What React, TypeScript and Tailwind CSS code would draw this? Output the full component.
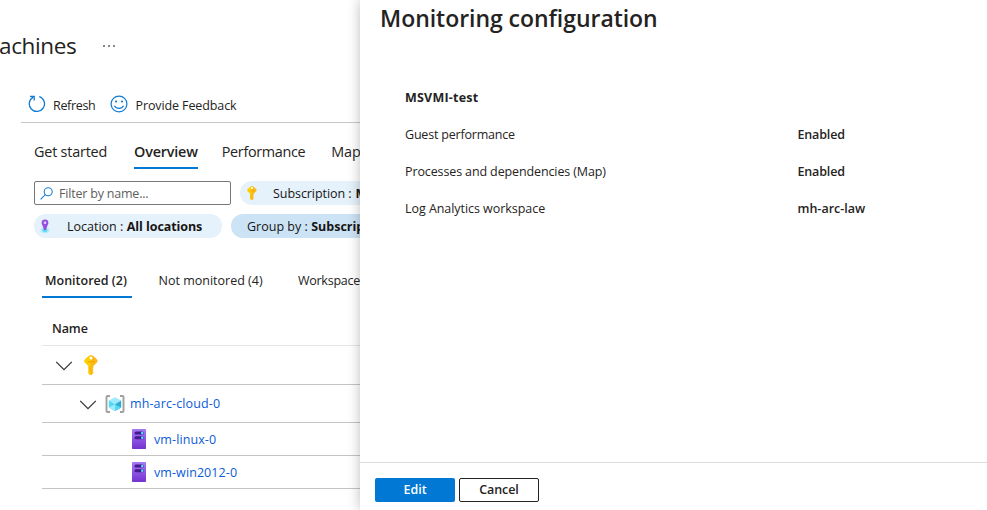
import type { ReactNode } from "react";

function KeyIcon({ className }: { className: string }) {
  return (
    <svg className={className} viewBox="0 0 14 20">
      <path d="M7 0 4.600.9 1 4.600C.3 5.400.3 6.600 1 7.400L4.500 11v7.600L6 20h1.500L9.300 18.300v-1.200l-.8-.8.8-.8v-1l-.8-.8.8-.8V11L13 7.400c.7-.8.7-2 0-2.800L9.400.9z" fill="#fbb917" />
      <path d="M7 0 4.600.9 1 4.600C.3 5.400.3 6.600 1 7.400L4.500 11v7.600L6 20h.6V0z" fill="#ffd000" />
      <circle cx="7" cy="3" r="1.500" fill="#fff" />
      <path d="M3.500 6.800h7" stroke="#f0a000" strokeWidth="1" />
      <path d="M6 11.500v6" stroke="#f5a300" strokeWidth=".8" />
    </svg>
  );
}

function PinIcon() {
  return (
    <svg className="h-[15px] w-3" viewBox="0 0 12 15">
      <ellipse cx="6" cy="11.300" rx="4.400" ry="3" fill="#b4ecfa" />
      <ellipse cx="6" cy="11.500" rx="2.600" ry="1.800" fill="#5fd9f3" />
      <path d="M6 .5a3.400 3.400 0 0 0-3.400 3.400c0 1.600 1.900 3.400 2.300 7.200h2.200c.4-3.800 2.300-5.600 2.300-7.200A3.400 3.400 0 0 0 6 .5z" fill="#9450e0" />
      <circle cx="6" cy="3.800" r="1.300" fill="#e6d0fb" />
    </svg>
  );
}

function Chevron() {
  return (
    <svg className="relative top-px h-[10px] w-[18px]" viewBox="0 0 18 10" fill="none" stroke="#3b3a39" strokeWidth="1.300">
      <path d="m1.200.9 7.800 7.800L16.800.9" />
    </svg>
  );
}

function ServerIcon() {
  return (
    <svg className="h-5 w-[14px]" viewBox="0 0 14 20">
      <defs>
        <linearGradient id="server" x1="0" y1="0" x2="0" y2="1">
          <stop offset="0" stopColor="#a67af4" />
          <stop offset="1" stopColor="#7431d0" />
        </linearGradient>
      </defs>
      <rect width="14" height="20" rx=".7" fill="url(#server)" />
      <rect x="2.500" y="2.500" width="9.300" height="3" rx="1.500" fill="#431a8c" />
      <rect x="2.500" y="7.300" width="9.300" height="3" rx="1.500" fill="#431a8c" />
      <circle cx="10.200" cy="4" r="1.200" fill="#50e6ff" />
      <circle cx="10.200" cy="8.800" r="1.200" fill="#50e6ff" />
    </svg>
  );
}

function ResourceGroupIcon() {
  return (
    <svg className="h-[18px] w-5" viewBox="0 0 20 18">
      <path d="M5 1H2.500a1 1 0 0 0-1 1v14a1 1 0 0 0 1 1H5M15 1h2.500a1 1 0 0 1 1 1v14a1 1 0 0 1-1 1H15" fill="none" stroke="#a0a0a0" strokeWidth="1.900" />
      <path d="m10 2.200 6.200 3.400L10 9.200 3.800 5.600z" fill="#9cebff" />
      <path d="M3.800 5.600 10 9.200v6.700l-6.200-3.500z" fill="#50d8f5" />
      <path d="M16.200 5.600 10 9.200v6.700l6.200-3.500z" fill="#32a9cf" />
      <path d="m3.800 12.400 6.200-3.200v6.700z" fill="#9cebff" />
      <path d="m16.200 12.400-6.200-3.200v6.700z" fill="#50d8f5" />
    </svg>
  );
}

function RefreshIcon() {
  return (
    <svg className="h-[18px] w-[18px]" viewBox="0 0 18 18" fill="none" stroke="#0f7bd4" strokeWidth="1.300">
      <path d="M11.300 1.600a7.600 7.600 0 1 1-6 .5" />
      <path d="M1.900 1.300h4.300v4.300" />
    </svg>
  );
}

function SmileIcon() {
  return (
    <svg className="h-[18px] w-[18px]" viewBox="0 0 18 18" fill="none" stroke="#0f7bd4" strokeWidth="1.200">
      <circle cx="9" cy="9" r="7.900" />
      <path d="M4.500 10.800c1.700 3.500 7.300 3.500 9 0" />
      <circle cx="6" cy="6.500" r="1.100" fill="#0f7bd4" stroke="none" />
      <circle cx="12" cy="6.500" r="1.100" fill="#0f7bd4" stroke="none" />
    </svg>
  );
}

function SearchIcon() {
  return (
    <svg className="h-[13px] w-[13px]" viewBox="0 0 13 13" fill="none" stroke="#1a80d6" strokeWidth="1.100">
      <circle cx="8.200" cy="4.800" r="4" />
      <path d="M5.300 7.700.6 12.400" />
    </svg>
  );
}

function Row({ className, children }: { className: string; children?: ReactNode }) {
  return <div className={`flex items-center border-b border-[#c4c4c4] ${className}`}>{children}</div>;
}

function Setting({ label, labelClass, value, valueClass }: { label: string; labelClass: string; value: string; valueClass: string }) {
  return (
    <div className="flex h-[37px] items-center">
      <span className={`w-[392.500px] ${labelClass}`}>{label}</span>
      <span className={`font-semibold ${valueClass}`}>{value}</span>
    </div>
  );
}

export default function App() {
  return (
    <div className="flex h-[510px] w-[987px] overflow-hidden bg-white font-['Open_Sans','Noto_Sans',sans-serif] text-[12.5px] leading-[18px] whitespace-nowrap text-[#242322]">
      <main className="flex w-[360px] shrink-0 flex-col overflow-hidden">
        <header className="flex h-[88px] items-center pt-1">
          <h1 className="-ml-px w-[104px] text-[22.5px] leading-[30px] tracking-[-0.35px]">achines</h1>
          <div className="flex gap-[3px]">
            <i className="h-[2px] w-[2px] bg-[#8a8886]" />
            <i className="h-[2px] w-[2px] bg-[#8a8886]" />
            <i className="h-[2px] w-[2px] bg-[#8a8886]" />
          </div>
        </header>

        <div className="ml-[21px] flex h-[35px] shrink-0 items-center border-b border-[#c8c8c8] pl-[7px]">
          <span className="mb-[2px]"><RefreshIcon /></span>
          <span className="mt-[2px] ml-[7px] w-[57px] tracking-[-0.33px]">Refresh</span>
          <span className="mb-[2px]"><SmileIcon /></span>
          <span className="mt-[2px] ml-[7.500px] tracking-[-0.11px]">Provide Feedback</span>
        </div>

        <nav className="flex h-[46px] shrink-0 pl-[34px] text-[14.4px]">
          <span className="mr-[27px] w-[73px] pt-5 tracking-[-0.2px]">Get started</span>
          <span className="mr-6 w-16 border-b-2 border-[#0078d4] pt-5 font-semibold tracking-[-0.19px]">Overview</span>
          <span className="mr-[26px] w-[85px] pt-5 tracking-[-0.32px]">Performance</span>
          <span className="pt-5 tracking-[-0.17px]">Map</span>
        </nav>

        <div className="mt-3 ml-[34px] flex h-6 shrink-0 gap-[9px]">
          <div className="flex w-[197px] shrink-0 items-center rounded-[2px] border border-[#7a7876] pl-[5px] text-[#605e5c]">
            <SearchIcon />
            <span className="mt-[2px] ml-[6px] tracking-[-0.2px]">Filter by name...</span>
          </div>
          <div className="flex w-[190px] shrink-0 items-center rounded-full bg-[#e5f1fb] pl-[7px] text-[#161514]">
            <KeyIcon className="h-[14px] w-[10px]" />
            <span className="mt-[2px] ml-4 tracking-[-0.06px]">Subscription :</span>
            <b className="mt-[2px] ml-1">M</b>
          </div>
        </div>

        <div className="mt-[9px] ml-[34px] flex h-6 shrink-0 gap-[9px] text-[#161514]">
          <div className="flex w-[188px] shrink-0 items-center rounded-full bg-[#e5f1fb] pl-[5px]">
            <PinIcon />
            <span className="mt-[2px] ml-4">Location :</span>
            <b className="mt-[2px] ml-[3.500px] tracking-[-0.08px]">All locations</b>
          </div>
          <div className="flex w-[190px] shrink-0 items-center rounded-full bg-[#cce3f5] pl-4">
            <span className="mt-[2px]">Group by :</span>
            <b className="mt-[2px] ml-[3.500px]">Subscrip</b>
          </div>
        </div>

        <nav className="mt-[26px] ml-[42px] flex h-[34px] shrink-0">
          <span className="mr-[27px] w-[90px] border-b-2 border-[#0078d4] pt-2 pl-[3px] font-semibold">Monitored (2)</span>
          <span className="mr-[35px] w-[105px] pt-2">Not monitored (4)</span>
          <span className="pt-2 tracking-[-0.25px]">Workspace</span>
        </nav>

        <section className="ml-[42px] text-[#0b5cd7]">
          <div className="flex h-12 items-end border-b border-[#e6e6e6] pb-[7px] pl-[10px] font-semibold tracking-[-0.1px] text-[#242322]">Name</div>
          <Row className="h-[39px] pl-[13px]">
            <Chevron />
            <KeyIcon className="ml-[10.500px] h-5 w-[14px]" />
          </Row>
          <Row className="h-[38px] pl-[37px]">
            <Chevron />
            <span className="ml-2"><ResourceGroupIcon /></span>
            <span className="ml-[5px] tracking-[0.12px]">mh-arc-cloud-0</span>
          </Row>
          <Row className="h-[33px] pl-[90px]">
            <ServerIcon />
            <span className="mt-[2px] ml-2 tracking-[0.1px]">vm-linux-0</span>
          </Row>
          <Row className="h-[33px] pl-[90px]">
            <ServerIcon />
            <span className="mt-[2px] ml-2 tracking-[0.09px]">vm-win2012-0</span>
          </Row>
        </section>
      </main>

      <aside className="relative z-10 flex flex-1 flex-col bg-white shadow-[0_0_12px_rgba(0,0,0,0.26)]">
        <h2 className="pt-[3px] pl-5 text-[23px] leading-[30px] font-semibold tracking-[-0.04px]">Monitoring configuration</h2>
        <div className="mt-[46px] flex flex-1 flex-col pl-[45px]">
          <div className="flex h-[37px] items-center font-bold tracking-[0.22px]">MSVMI-test</div>
          <Setting label="Guest performance" labelClass="tracking-[-0.2px]" value="Enabled" valueClass="tracking-[-0.15px]" />
          <Setting label="Processes and dependencies (Map)" labelClass="tracking-[-0.12px]" value="Enabled" valueClass="tracking-[-0.15px]" />
          <Setting label="Log Analytics workspace" labelClass="tracking-[-0.05px]" value="mh-arc-law" valueClass="" />
        </div>
        <footer className="flex h-12 items-start gap-1 border-t border-[#dcdcdc] pt-[15px] pl-[15px] font-semibold">
          <button className="h-6 w-20 rounded-[2px] bg-[#0078d4] text-white">Edit</button>
          <button className="h-6 w-20 rounded-[2px] border border-[#242322] bg-white leading-[16px] tracking-[-0.1px]">Cancel</button>
        </footer>
      </aside>
    </div>
  );
}
